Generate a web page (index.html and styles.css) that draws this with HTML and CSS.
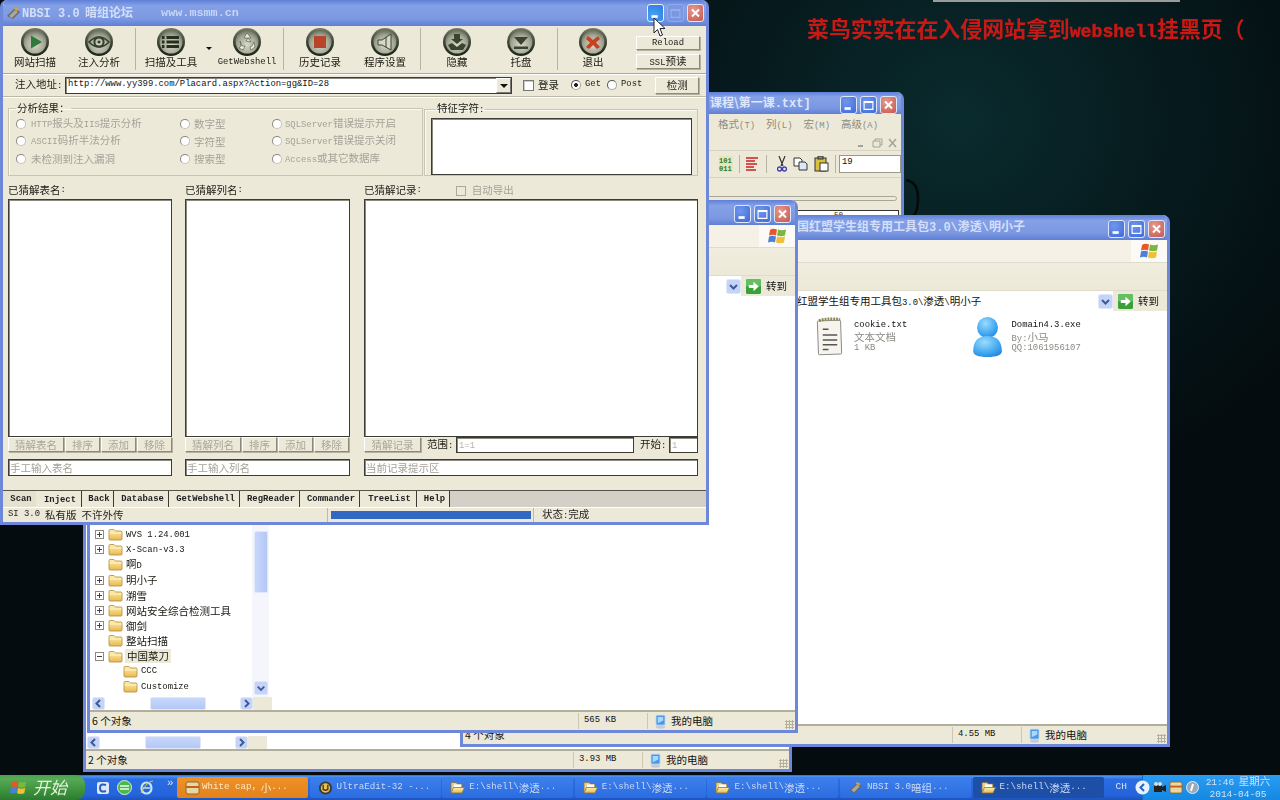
FILE: index.html
```html
<!DOCTYPE html>
<html lang="zh">
<head>
<meta charset="utf-8">
<title>NBSI 3.0</title>
<link rel="stylesheet" href="styles.css">
</head>
<body>
<svg class="defs" width="0" height="0">
<defs>
<linearGradient id="rim" x1="0" y1="0" x2="0" y2="1"><stop offset="0" stop-color="#767b68"/><stop offset=".5" stop-color="#3c4636"/><stop offset="1" stop-color="#1c2619"/></linearGradient>
<radialGradient id="ballIn" cx=".5" cy=".62" r=".62"><stop offset="0" stop-color="#d9d8ca"/><stop offset=".65" stop-color="#a5a897"/><stop offset="1" stop-color="#6c7260"/></radialGradient>
<linearGradient id="fold" x1="0" y1="0" x2="0" y2="1"><stop offset="0" stop-color="#fff0b0"/><stop offset="1" stop-color="#e8b850"/></linearGradient>
<radialGradient id="user" cx=".4" cy=".3" r=".9"><stop offset="0" stop-color="#9adcff"/><stop offset=".6" stop-color="#3da4ee"/><stop offset="1" stop-color="#1a6fd0"/></radialGradient>
<symbol id="ball" viewBox="0 0 28 28"><circle cx="14" cy="14" r="14" fill="url(#rim)"/><circle cx="14" cy="14" r="11.5" fill="url(#ballIn)"/></symbol>
<symbol id="folder" viewBox="0 0 15 13"><path d="M1 2.5 Q1 1.5 2 1.5H6L7.5 3H13Q14 3 14 4V11Q14 12 13 12H2Q1 12 1 11Z" fill="url(#fold)" stroke="#b08a3a" stroke-width=".8"/><path d="M1.5 5H13.5" stroke="#fff6c8" stroke-width="1"/></symbol>
<symbol id="folder-open" viewBox="0 0 15 13"><path d="M1 2Q1 1 2 1H6L7.5 2.5H12V11H1Z" fill="#e8d090" stroke="#8a7440" stroke-width=".8"/><rect x="4" y="3" width="7" height="5" fill="#fff"/><path d="M1 11.5 3.5 6H14.5L12 11.5Z" fill="url(#fold)" stroke="#8a7440" stroke-width=".8"/></symbol>
<symbol id="pc" viewBox="0 0 12 16"><path d="M2 1H10Q11 1 11 2V11Q11 12 10 12H2Q1 12 1 11V2Q1 1 2 1Z" fill="#4a98e6" stroke="#cfe0f4"/><ellipse cx="6" cy="14" rx="5" ry="1.8" fill="#c6c9d6"/><path d="M3 3H9V7L3 10Z" fill="#a8d8fa"/></symbol>
<symbol id="winlogo" viewBox="0 0 20 18"><path d="M3 3Q6 1 10 2.5L9 8.5Q6 7 2 8.5Z" fill="#e8562a"/><path d="M11 2.5Q15 4 19 2.5L18 8.5Q14 10 10 8.5Z" fill="#78b840"/><path d="M2 9.5Q5 8 9 9.5L8 15.5Q5 14 1 15.5Z" fill="#4a80d8"/><path d="M10 9.5Q14 11 18 9.5L17 15.5Q13 17 9 15.5Z" fill="#f0c030"/></symbol>
<symbol id="go" viewBox="0 0 16 16"><rect width="16" height="16" rx="2" fill="#3aa03a"/><rect width="16" height="8" rx="2" fill="#62c062"/><path d="M3 6.5H8V3L13.5 8 8 13V9.5H3Z" fill="#fff"/></symbol>
<symbol id="chev-d" viewBox="0 0 15 15"><rect x=".5" y=".5" width="14" height="14" rx="2" fill="#c4d3f6" stroke="#dfe7fb"/><path d="M4 6 7.5 9.5 11 6" fill="none" stroke="#3d5a98" stroke-width="2"/></symbol>
<symbol id="chev-l" viewBox="0 0 13 13"><rect x=".5" y=".5" width="12" height="12" rx="2" fill="#c4d3f6" stroke="#dfe7fb"/><path d="M8 3 4.5 6.5 8 10" fill="none" stroke="#3d5a98" stroke-width="2"/></symbol>
<symbol id="chev-r" viewBox="0 0 13 13"><rect x=".5" y=".5" width="12" height="12" rx="2" fill="#c4d3f6" stroke="#dfe7fb"/><path d="M5 3 8.5 6.5 5 10" fill="none" stroke="#3d5a98" stroke-width="2"/></symbol>
<symbol id="cmin" viewBox="0 0 17 17"><rect x="4" y="11" width="7" height="3" fill="#fff"/></symbol>
<symbol id="cmax" viewBox="0 0 17 17"><path d="M3.5 4.5H13.5V13.5H3.5Z M3.5 5.5H13.5" fill="none" stroke="#fff" stroke-width="1.3"/></symbol>
<symbol id="cx" viewBox="0 0 17 17"><path d="M4.5 4.5 12.5 12.5M12.5 4.5 4.5 12.5" stroke="#fff" stroke-width="2.2"/></symbol>
<symbol id="nbsi" viewBox="0 0 15 15"><path d="M1 10 9 2 14 6 7 13Z" fill="#6a6a64"/><path d="M3 10 9 4 12 6 6 12Z" fill="#a8a89e"/><path d="M9 1 13 3 11 5 8 3Z" fill="#e0a030"/></symbol>
</defs>
</svg>

<div class="slogan">菜鸟实实在在入侵网站拿到<span class="sl">webshell</span>挂黑页（</div>
<div class="topstrip"></div>
<svg class="arc" viewBox="0 0 20 40" width="20" height="40"><path d="M2 2Q14 4 14 20T8 38" fill="none" stroke="#05090a" stroke-width="2.5"/></svg>

<!-- UltraEdit -->
<section class="win w-a">
  <div class="title tt-a"><span class="tt">课程\第一课<span class="tl">.txt]</span></span>
    <div class="caps"><span class="cap"><svg><use href="#cmin"/></svg></span><span class="cap"><svg><use href="#cmax"/></svg></span><span class="cap red"><svg><use href="#cx"/></svg></span></div>
  </div>
  <div class="a-menu"><span>格式<span class="m">(T)</span></span><span>列<span class="m">(L)</span></span><span>宏<span class="m">(M)</span></span><span>高级<span class="m">(A)</span></span></div>
  <div class="a-mdi"><svg width="48" height="10" viewBox="0 0 48 10"><path d="M6 8H11" stroke="#a5a398" stroke-width="2"/><path d="M21 3H28V9H21ZM23 3V1H30V7H28" fill="none" stroke="#a5a398"/><path d="M37 1 44 9M44 1 37 9" stroke="#a5a398" stroke-width="1.5"/></svg></div>
  <div class="a-tool">
    <svg class="ai" width="14" height="16" viewBox="0 0 14 16"><rect width="14" height="16" fill="#e6e4c0"/><text x="0" y="7" class="bin">101</text><text x="0" y="15" class="bin">011</text></svg>
    <i class="asep"></i>
    <svg class="ai" width="12" height="14" viewBox="0 0 12 14"><path d="M0 1H12M0 4H9M0 7H11M0 10H8M0 13H10" stroke="#c82020" stroke-width="1.5"/></svg>
    <i class="asep as2"></i>
    <svg class="ai" width="10" height="16" viewBox="0 0 10 16"><path d="M2 0 6 10M8 0 4 10" stroke="#333" stroke-width="1.2"/><circle cx="2.5" cy="13" r="2" fill="none" stroke="#3a3ab0" stroke-width="1.3"/><circle cx="7.5" cy="13" r="2" fill="none" stroke="#3a3ab0" stroke-width="1.3"/></svg>
    <svg class="ai" width="15" height="14" viewBox="0 0 15 14"><path d="M1 1H7L9 3V9H1Z" fill="#fff" stroke="#333"/><path d="M6 5H12L14 7V13H6Z" fill="#dfe6f6" stroke="#333"/></svg>
    <svg class="ai" width="15" height="16" viewBox="0 0 15 16"><rect x="1" y="2" width="11" height="13" fill="#d8c040" stroke="#333"/><rect x="4" y="0" width="5" height="3" fill="#888" stroke="#333"/><rect x="6" y="7" width="8" height="8" fill="#fff" stroke="#333"/></svg>
    <i class="asep"></i>
    <div class="a-input m">19</div>
  </div>
  <div class="a-slider"></div>
  <div class="a-ruler m">50</div>
</section>

<!-- Explorer B -->
<section class="win w-b">
  <div class="title"></div>
  <div class="x-body">
    <div class="x-left"><div class="x-tree-fill"></div>
      <div class="hscroll"><svg class="sb"><use href="#chev-l"/></svg><div class="htrack"><i class="hthumb"></i></div><svg class="sb"><use href="#chev-r"/></svg><i class="corner"></i></div>
    </div>
  </div>
  <div class="status st-b"><div>2 个对象</div><div>3.93 MB</div><div class="pc"><svg><use href="#pc"/></svg>我的电脑</div><i class="grip"></i></div>
</section>

<!-- Explorer D -->
<section class="win w-d">
  <div class="title tt-d"><span class="tt pad-d">国红盟学生组专用工具包<span class="tl">3.0\</span>渗透<span class="tl">\</span>明小子</span>
    <div class="caps"><span class="cap"><svg><use href="#cmin"/></svg></span><span class="cap"><svg><use href="#cmax"/></svg></span><span class="cap red"><svg><use href="#cx"/></svg></span></div>
  </div>
  <div class="x-menu"><div class="logo"><svg><use href="#winlogo"/></svg></div></div>
  <div class="x-tool"></div>
  <div class="x-addr"><div class="combo pad-addr">红盟学生组专用工具包<span class="m">3.0\</span>渗透<span class="m">\</span>明小子</div><svg class="dd"><use href="#chev-d"/></svg><div class="goto"><svg><use href="#go"/></svg>转到</div></div>
  <div class="files">
    <div class="file"><svg class="f-ico" viewBox="0 0 30 40"><rect x="3" y="3" width="24" height="35" rx="1" fill="#f6f4ec" stroke="#8a8a88" transform="rotate(-2 15 20)"/><path d="M4 3Q15 0 26 2" stroke="#8a8a50" stroke-width="3" stroke-dasharray="2 1" fill="none"/><path d="M8 12H14M8 18H23M8 23H23M8 28H23M8 33H14" stroke="#555" stroke-width="1.6"/></svg>
      <div class="f-txt"><b class="m">cookie.txt</b><span>文本文档</span><span class="m">1 KB</span></div></div>
    <div class="file"><svg class="f-ico" viewBox="0 0 30 42"><circle cx="15" cy="11" r="11" fill="url(#user)"/><path d="M0 36Q0 20 15 20T30 36Q30 42 15 42T0 36Z" fill="url(#user)"/></svg>
      <div class="f-txt"><b class="m">Domain4.3.exe</b><span><span class="m">By:</span>小马</span><span class="m">QQ:1061956107</span></div></div>
  </div>
  <div class="status st-d"><div>4 个对象</div><div>4.55 MB</div><div class="pc"><svg><use href="#pc"/></svg>我的电脑</div><i class="grip"></i></div>
</section>

<!-- Explorer C -->
<section class="win w-c">
  <div class="title tt-c">
    <div class="caps"><span class="cap"><svg><use href="#cmin"/></svg></span><span class="cap"><svg><use href="#cmax"/></svg></span><span class="cap red"><svg><use href="#cx"/></svg></span></div>
  </div>
  <div class="x-menu"><div class="logo"><svg><use href="#winlogo"/></svg></div></div>
  <div class="x-tool c-tool"></div>
  <div class="x-addr"><div class="combo"></div><svg class="dd"><use href="#chev-d"/></svg><div class="goto"><svg><use href="#go"/></svg>转到</div></div>
  <div class="x-body">
    <div class="x-left">
      <div class="tree-wrap">
        <div class="tree">
          <div class="row"><i class="exp"></i><svg class="fo"><use href="#folder"/></svg><span class="m">WVS 1.24.001</span></div>
          <div class="row"><i class="exp"></i><svg class="fo"><use href="#folder"/></svg><span class="m">X-Scan-v3.3</span></div>
          <div class="row"><i class="exp none"></i><svg class="fo"><use href="#folder"/></svg><span>啊<span class="m">D</span></span></div>
          <div class="row"><i class="exp"></i><svg class="fo"><use href="#folder"/></svg><span>明小子</span></div>
          <div class="row"><i class="exp"></i><svg class="fo"><use href="#folder"/></svg><span>溯雪</span></div>
          <div class="row"><i class="exp"></i><svg class="fo"><use href="#folder"/></svg><span>网站安全综合检测工具</span></div>
          <div class="row"><i class="exp"></i><svg class="fo"><use href="#folder"/></svg><span>御剑</span></div>
          <div class="row"><i class="exp none"></i><svg class="fo"><use href="#folder"/></svg><span>整站扫描</span></div>
          <div class="row"><i class="exp minus"></i><svg class="fo"><use href="#folder"/></svg><span class="sel">中国菜刀</span></div>
          <div class="row sub"><svg class="fo"><use href="#folder"/></svg><span class="m">CCC</span></div>
          <div class="row sub"><svg class="fo"><use href="#folder"/></svg><span class="m">Customize</span></div>
        </div>
        <div class="vscroll"><i class="vthumb"></i><svg class="sbv"><use href="#chev-d"/></svg></div>
      </div>
      <div class="hscroll"><svg class="sb"><use href="#chev-l"/></svg><div class="htrack"><i class="hthumb"></i></div><svg class="sb"><use href="#chev-r"/></svg><i class="corner"></i></div>
    </div>
  </div>
  <div class="status st-c"><div>6 个对象</div><div>565 KB</div><div class="pc"><svg><use href="#pc"/></svg>我的电脑</div><i class="grip"></i></div>
</section>

<!-- NBSI main -->
<section class="win w-main">
  <div class="title tt-main">
    <svg class="t-ico"><use href="#nbsi"/></svg>
    <span class="tt"><span class="tl">NBSI 3.0</span>&nbsp; 暗组论坛</span><span class="tl site">www.msmm.cn</span>
    <div class="caps"><span class="cap hot"><svg><use href="#cmin"/></svg></span><span class="cap dim"><svg><use href="#cmax"/></svg></span><span class="cap red"><svg><use href="#cx"/></svg></span></div>
  </div>

  <div class="toolbar">
    <div class="tool w64"><svg class="b"><use href="#ball"/><path d="M10 7.5 21 14 10 20.5Z" fill="#2f7a3a"/></svg><span>网站扫描</span></div>
    <div class="tool w64"><svg class="b"><use href="#ball"/><path d="M4 14Q14 4 24 14 14 24 4 14Z" fill="none" stroke="#33402c" stroke-width="1.6"/><circle cx="14" cy="14" r="4.6" fill="none" stroke="#33402c" stroke-width="2"/><circle cx="14" cy="14" r="1.6" fill="#33402c"/></svg><span>注入分析</span></div>
    <i class="sep"></i>
    <div class="tool w64"><svg class="b"><use href="#ball"/><path d="M9.5 9.5H22M9.5 14H22M9.5 18.5H22" stroke="#25301f" stroke-width="3"/><path d="M5 9.5H7.5M5 14H7.5M5 18.5H7.5" stroke="#25301f" stroke-width="3"/></svg><span>扫描及工具</span></div>
    <svg class="drop" width="12" height="47" viewBox="0 0 12 47"><path d="M3 21H9L6 24Z" fill="#111"/></svg>
    <div class="tool w64"><svg class="b"><use href="#ball"/><path d="M14 5 18 10H15L18 14 13 13 15 10H11ZM7 13 9 18 12 18 10 22 6 20 8 18ZM21 14 22 19 18 22 17 19 19 18Z" fill="#eceae0" stroke="#5a6450" stroke-width=".7"/></svg><span class="m">GetWebshell</span></div>
    <i class="sep"></i>
    <div class="tool w66"><svg class="b"><use href="#ball"/><rect x="8" y="8" width="12" height="12" fill="#b8452a"/></svg><span>历史记录</span></div>
    <div class="tool w64"><svg class="b"><use href="#ball"/><path d="M7 12H11L20 6V22L11 17H7Z" fill="#d8d6c8" stroke="#3c4636"/><path d="M15 9V19" stroke="#3c4636"/></svg><span>程序设置</span></div>
    <i class="sep s3"></i>
    <div class="tool w66"><svg class="b"><use href="#ball"/><path d="M11 6H17V11H20L14 16 8 11H11Z" fill="#39452f"/><path d="M5 17 9 15 14 19 19 15 23 17 20 22H8Z" fill="#39452f"/></svg><span>隐藏</span></div>
    <div class="tool w62"><svg class="b"><use href="#ball"/><path d="M7 9H21L14 17Z" fill="#39452f"/><rect x="7" y="18.5" width="14" height="2.5" fill="#39452f"/></svg><span>托盘</span></div>
    <i class="sep s4"></i>
    <div class="tool w64"><svg class="b"><use href="#ball"/><path d="M9 8 14 12 19 8 21 11 17 14.5 21 19 18 21 14 17 10 21 7 19 11 14.5 7 11Z" fill="#c9421f"/></svg><span>退出</span></div>
    <div class="tb-btns"><button class="btn m">Reload</button><button class="btn"><span class="m">SSL</span>预读</button></div>
  </div>

  <div class="addr">
    <label class="a-lbl">注入地址<span class="m">:</span></label>
    <div class="inp a-url"><span class="m">http://www.yy399.com/Placard.aspx?Action=gg&amp;ID=28</span><i class="a-dd"></i></div>
    <i class="check ck1"></i><span class="lg">登录</span>
    <i class="radio on"></i><span class="m g">Get</span>
    <i class="radio"></i><span class="m g">Post</span>
    <button class="btn chk">检测</button>
  </div>

  <div class="analysis">
    <fieldset class="fs fs1"><legend>分析结果：</legend>
      <div class="opts">
        <div class="opt"><i class="radio"></i><span><span class="m">HTTP</span>报头及<span class="m">IIS</span>提示分析</span></div>
        <div class="opt"><i class="radio"></i><span>数字型</span></div>
        <div class="opt"><i class="radio"></i><span><span class="m">SQLServer</span>错误提示开启</span></div>
        <div class="opt"><i class="radio"></i><span><span class="m">ASCII</span>码折半法分析</span></div>
        <div class="opt"><i class="radio"></i><span>字符型</span></div>
        <div class="opt"><i class="radio"></i><span><span class="m">SQLServer</span>错误提示关闭</span></div>
        <div class="opt"><i class="radio"></i><span>未检测到注入漏洞</span></div>
        <div class="opt"><i class="radio"></i><span>搜索型</span></div>
        <div class="opt"><i class="radio"></i><span><span class="m">Access</span>或其它数据库</span></div>
      </div>
    </fieldset>
    <fieldset class="fs fs2"><legend>特征字符<span class="m">:</span></legend><div class="inp feature"></div></fieldset>
  </div>

  <div class="cols">
    <div class="col c1">
      <div class="c-lbl">已猜解表名<span class="m">:</span></div>
      <div class="inp listbox"></div>
      <div class="c-btns"><button class="btn dis b56">猜解表名</button><button class="btn dis b35">排序</button><button class="btn dis b35">添加</button><button class="btn dis b35">移除</button></div>
      <div class="inp hint">手工输入表名</div>
    </div>
    <div class="col c2">
      <div class="c-lbl">已猜解列名<span class="m">:</span></div>
      <div class="inp listbox"></div>
      <div class="c-btns"><button class="btn dis b56">猜解列名</button><button class="btn dis b35">排序</button><button class="btn dis b35">添加</button><button class="btn dis b35">移除</button></div>
      <div class="inp hint">手工输入列名</div>
    </div>
    <div class="col c3">
      <div class="c-lbl">已猜解记录<span class="m">:</span><i class="check ck2"></i><span class="ae">自动导出</span></div>
      <div class="inp listbox"></div>
      <div class="c-btns rec"><button class="btn dis b57">猜解记录</button><span class="r1">范围<span class="m">:</span></span><div class="inp r2"><span class="m">1=1</span></div><span class="r3">开始<span class="m">:</span></span><div class="inp r4"><span class="m">1</span></div></div>
      <div class="inp hint">当前记录提示区</div>
    </div>
  </div>

  <div class="tabs">
    <span class="tab t-scan">Scan</span><span class="tab on t-inj">Inject</span><span class="tab t-back">Back</span><span class="tab t-db">Database</span><span class="tab t-gw">GetWebshell</span><span class="tab t-rr">RegReader</span><span class="tab t-cm">Commander</span><span class="tab t-tl">TreeList</span><span class="tab t-hp">Help</span>
  </div>
  <div class="mstatus">
    <div class="ms1"><span class="m">SI 3.0</span><span>私有版</span><span>不许外传</span></div>
    <div class="ms2"><i class="bar"></i></div>
    <div class="ms3">状态<span class="m">:</span>完成</div>
  </div>
</section>

<svg class="cursor" width="13" height="21" viewBox="0 0 13 21"><path d="M1 1V16L4.5 12.5 7 19 9.5 18 7 11.5H12Z" fill="#fff" stroke="#223" stroke-width="1"/></svg>

<footer class="taskbar">
  <div class="start"><svg width="18" height="17"><use href="#winlogo"/></svg><span>开始</span></div>
  <div class="quick">
    <svg width="14" height="14" viewBox="0 0 14 14"><rect x="1" y="1" width="12" height="12" rx="2" fill="#dfe8fa"/><path d="M10 4Q4 2 4 7T10 10" fill="none" stroke="#2a5cc0" stroke-width="2"/></svg>
    <svg width="15" height="15" viewBox="0 0 15 15"><circle cx="7.5" cy="7.5" r="7" fill="#4cb84c" stroke="#d8f0d8"/><path d="M3 6H12M3 9H12" stroke="#e8ffe8" stroke-width="1.6"/></svg>
    <svg width="15" height="15" viewBox="0 0 15 15"><ellipse cx="7.5" cy="8" rx="5" ry="5.5" fill="none" stroke="#bfe6fa" stroke-width="2.2"/><path d="M4 8H11" stroke="#bfe6fa" stroke-width="1.5"/><path d="M14 1Q8 1 2 13" fill="none" stroke="#e8c040" stroke-width="1"/></svg>
    <span class="more m">»</span>
  </div>
  <div class="tasks">
    <div class="task flash"><svg class="ti" viewBox="0 0 15 14"><rect x="1" y="1" width="13" height="12" rx="2" fill="#e8d8a0" stroke="#8a6a30"/><path d="M1 6H14" stroke="#c06020" stroke-width="2"/></svg><span class="m">White cap，</span>小<span class="m">...</span></div>
    <div class="task"><svg class="ti" viewBox="0 0 15 15"><circle cx="7.5" cy="7.5" r="7" fill="#3a3a30"/><circle cx="7.5" cy="7.5" r="5" fill="#e8c050"/><path d="M5 4V9Q7.5 11 10 9V4" fill="none" stroke="#3a3a30" stroke-width="1.5"/></svg><span class="m">UltraEdit-32 -...</span></div>
    <div class="task"><svg class="ti"><use href="#folder-open"/></svg><span class="m">E:\shell\</span>渗透<span class="m">...</span></div>
    <div class="task"><svg class="ti"><use href="#folder-open"/></svg><span class="m">E:\shell\</span>渗透<span class="m">...</span></div>
    <div class="task"><svg class="ti"><use href="#folder-open"/></svg><span class="m">E:\shell\</span>渗透<span class="m">...</span></div>
    <div class="task"><svg class="ti"><use href="#nbsi"/></svg><span class="m">NBSI 3.0 </span>暗组<span class="m">...</span></div>
    <div class="task active"><svg class="ti"><use href="#folder-open"/></svg><span class="m">E:\shell\</span>渗透<span class="m">...</span></div>
  </div>
  <span class="lang m">CH</span>
  <div class="tray">
    <svg class="tb" width="15" height="15" viewBox="0 0 15 15"><circle cx="7.5" cy="7.5" r="7" fill="#e8f2fc"/><path d="M9 4 5.5 7.5 9 11" fill="none" stroke="#2a62c8" stroke-width="2"/></svg>
    <svg width="13" height="12" viewBox="0 0 13 12"><rect x="1" y="3" width="8" height="7" fill="#222"/><path d="M9 5 13 3V10L9 8Z" fill="#222"/><circle cx="3" cy="2" r="2" fill="#ddd"/><circle cx="7" cy="2" r="2" fill="#ddd"/></svg>
    <svg width="14" height="13" viewBox="0 0 15 14"><rect x="1" y="1" width="13" height="12" rx="2" fill="#e8d8a0" stroke="#8a6a30"/><path d="M1 6H14" stroke="#c06020" stroke-width="2"/></svg>
    <svg width="13" height="13" viewBox="0 0 13 13"><circle cx="6.5" cy="6.5" r="6" fill="#9ab" stroke="#e4ecf4"/><path d="M7 3 5 10" stroke="#fff" stroke-width="2"/></svg>
    <div class="clock"><div><span class="m">21:46</span>&nbsp; 星期六</div><div class="m">2014-04-05</div></div>
  </div>
</footer>
</body>
</html>
```
FILE: styles.css
```css
*{box-sizing:border-box}
html,body{margin:0;padding:0;height:100%}
body{width:1280px;height:800px;overflow:hidden;position:relative;
  background:radial-gradient(ellipse 420px 380px at 960px 120px,#0a2b2e 0,#06191c 55%,#040c0f 100%),#04090c;
  font-family:"Noto Sans CJK SC","Liberation Sans",sans-serif;font-size:10.5px;color:#1c1c14;line-height:1.1;filter:blur(.3px)}
.defs{position:absolute}
.m{font-family:"Liberation Mono","Noto Sans CJK SC",monospace;font-size:8.9px}
.tl{font-family:"Liberation Mono","Noto Sans CJK SC",monospace;font-size:12px}
i{display:block;font-style:normal}
button{font-family:inherit;font-size:inherit;color:inherit;padding:0;margin:0}

.slogan{position:absolute;left:807px;top:15px;font-size:21.9px;font-weight:700;color:#d41a16;white-space:nowrap;line-height:26px;opacity:.95}
.sl{font-family:"Liberation Mono",monospace;font-size:18.2px;font-weight:700;-webkit-text-stroke:.5px #d41a16}
.topstrip{position:absolute;left:933px;top:0;width:247px;height:2px;background:#9a9c9c}
.arc{position:absolute;left:904px;top:178px}

/* windows */
.win{position:absolute;display:flex;flex-direction:column;background:#ece9d8;border:3px solid #6d88da;border-top:0;border-radius:7px 7px 0 0;overflow:hidden}
.w-a{left:500px;top:92px;width:404px;height:300px}
.w-b{left:83px;top:400px;width:709px;height:372px}
.w-d{left:460px;top:215px;width:710px;height:532px}
.w-c{left:87px;top:200px;width:711px;height:533px}
.w-main{left:0;top:0;width:709px;height:525px}

.title{flex:none;height:23px;display:flex;align-items:center;padding-right:2px;margin:0 -3px;padding-left:3px;
  background:linear-gradient(180deg,#5f80d8 0,#84a0e6 22%,#7c98e2 72%,#5f7fd6 100%)}
.tt-a{height:22px;padding-left:210px;padding-top:4px}
.tt-c{height:25px;padding-top:3px}
.tt-d{height:25px;padding-top:3px}
.tt-main{height:26px}
.tt{font-size:12px;font-weight:700;color:#d3dffa;white-space:nowrap}
.pad-d{padding-left:334px}
.tt-a .tt{color:#dde6fb;margin-top:-4px}
.tt-d .tt{margin-top:-3px}
.caps{margin-left:auto;display:flex;gap:3px;padding-right:3px}
.tt-a .caps,.tt-c .caps{padding-right:5px}
.cap{width:17px;height:18px;border:1px solid #dfe7fb;border-radius:3px;background:radial-gradient(circle at 35% 30%,#6f97ee,#3f69d6);display:block}
.cap svg{display:block;width:15px;height:16px}
.cap.red{background:radial-gradient(circle at 35% 30%,#e8988c,#c4584e)}
.cap.hot{background:radial-gradient(circle at 35% 70%,#4aa4f4,#2c7ae2);border-color:#e8f0fc}
.cap.dim{background:#7a97e2;border-color:#94ade8;opacity:.9}
.cap.dim svg{opacity:.25}
.t-ico{width:15px;height:15px;margin:0 1px 0 3px;flex:none}
.site{margin-left:28px;font-weight:700;color:#c8d6f6;font-size:11.8px}

/* ultraedit */
.a-menu{height:21px;flex:none;display:flex;justify-content:flex-end;align-items:center;gap:11px;padding-right:23px;color:#8d8b80;background:#ece9d8}
.a-mdi{height:15px;flex:none;display:flex;justify-content:flex-end;align-items:center;padding-right:1px}
.a-tool{height:28px;flex:none;display:flex;justify-content:flex-end;align-items:center;gap:6px;border-top:1px solid #d8d4c4;border-bottom:1px solid #d8d4c4}
.asep{width:1px;height:18px;background:#b8b4a2}
.as2{margin:0 4px 0 2px}
.bin{font-family:"Liberation Mono",monospace;font-size:7px;font-weight:700;fill:#2a7a2a}
.a-input{width:62px;height:18px;margin-left:-3px;background:#fff;border:1px solid #9a9888;padding:2px 2px;color:#111}
.a-slider{height:5px;flex:none;margin:18px 4px 0 0;border:1px solid #a8a698;border-radius:3px;background:#ece9d8}
.a-ruler{height:7px;flex:none;margin:9px 2px 0 0;background:#fff;border:1px solid #333;border-bottom:0;padding-left:330px;color:#222;font-size:7.5px;line-height:8px;overflow:hidden}

/* explorer */
.x-menu{height:23px;flex:none;display:flex;justify-content:flex-end;background:#f5f1e6;border-bottom:1px solid #e0dccb}
.logo{width:36px;background:#fbfaf6;display:flex;align-items:center;justify-content:center}
.logo svg{width:20px;height:18px}
.x-tool{height:28px;flex:none;background:linear-gradient(180deg,#f1eddf,#ece9d8);border-bottom:1px solid #e0dccb}
.c-tool{height:28px}
.x-addr{height:20px;flex:none;display:flex;align-items:center;background:#ece9d8}
.combo{flex:1;height:20px;background:#fff;white-space:nowrap;padding-top:4px;color:#111;overflow:hidden}
.pad-addr{padding-left:334px}
.dd{width:15px;height:15px;flex:none;margin-left:-15px;position:relative}
.goto{width:54px;flex:none;display:flex;align-items:center;gap:5px;padding-left:5px;color:#111;white-space:nowrap}
.goto svg{width:15px;height:15px;flex:none}
.x-body{flex:1;min-height:0;display:flex;background:#fff}
.x-left{width:180px;display:flex;flex-direction:column;margin-left:2px;flex:none}
.w-b .x-left{margin-left:1px}
.x-tree-fill{flex:1}
.tree-wrap{flex:1;min-height:0;display:flex;overflow:hidden}
.tree{flex:1;display:flex;flex-direction:column;justify-content:flex-end;padding:0 0 3px 3px;color:#16160f}
.row{height:15.2px;flex:none;display:flex;align-items:center;white-space:nowrap}
.row.sub{padding-left:28px}
.row>.m{font-size:8.9px;padding-top:2px}
.exp{width:9px;height:9px;margin-right:4px;flex:none;border:1px solid #8a8a80;background:linear-gradient(90deg,#444,#444) center/5px 1px no-repeat,linear-gradient(#444,#444) center/1px 5px no-repeat,#fff}
.exp.minus{background:linear-gradient(90deg,#444,#444) center/5px 1px no-repeat,#fff}
.exp.none{visibility:hidden}
.fo{width:15px;height:13px;margin-right:3px;flex:none}
.sel{background:#ece9d8;padding:1px 2px;margin-left:-1px}
.vscroll{width:17px;flex:none;margin-right:3px;display:flex;flex-direction:column;justify-content:flex-end;align-items:center;padding-bottom:2px;background:#f4f6fb}
.vthumb{width:14px;height:62px;margin-bottom:88px;border-radius:2px;background:linear-gradient(90deg,#c8d7fb,#b4c8f6);border:1px solid #e0e8fa}
.sbv{width:14px;height:14px;flex:none}
.hscroll{height:13px;flex:none;display:flex;align-items:center;background:#fff}
.sb{width:13px;height:13px;flex:none}
.htrack{width:135px;height:13px;padding-left:45px}
.hthumb{width:56px;height:13px;border-radius:2px;background:linear-gradient(#c8d7fb,#b4c8f6);border:1px solid #e0e8fa}
.corner{flex:1;height:13px;background:#ece9d8;align-self:stretch}
.status{height:20px;flex:none;display:grid;align-items:center;position:relative;background:#ece9d8;border-top:2px solid #b2ae9c;color:#111;white-space:nowrap}
.status>div{padding-left:5px;height:16px;display:flex;align-items:center;font-family:"Liberation Mono","Noto Sans CJK SC",monospace}
.status>div+div{border-left:1px solid #cbc7b4}
.status>div:first-child{padding-left:2px;font-family:"Noto Sans CJK SC",sans-serif}
.status>div:nth-child(2){font-size:8.9px}
.status>div:nth-child(3){font-family:"Noto Sans CJK SC",sans-serif;padding-left:7px;gap:5px}
.pc svg{width:11px;height:15px;flex:none}
.st-b{grid-template-columns:487px 69px 1fr}
.st-c{grid-template-columns:488px 69px 1fr}
.st-d{grid-template-columns:489px 69px 1fr}
.grip{position:absolute;right:1px;bottom:1px;width:9px;height:9px;background:radial-gradient(circle,#b4b09c 1px,transparent 1.2px) 0 0/3px 3px}
.files{flex:1;background:#fff;display:flex;padding:6px 0 0 352px;color:#8a8a86}
.file{width:157.5px;display:flex;gap:10px;flex:none}
.f-ico{width:29px;height:40px;flex:none}
.f-txt{display:flex;flex-direction:column;padding-top:3px;line-height:11px}
.f-txt>*{display:block;height:11px;white-space:nowrap}
.f-txt>*:nth-child(3){margin-top:0;line-height:12px}
.f-txt b{font-weight:400;color:#111}

/* NBSI toolbar */
.toolbar{height:48px;flex:none;display:flex;border-bottom:1px solid #aca899;box-shadow:0 1px 0 #fff;position:relative}
.tool{display:flex;flex-direction:column;align-items:center;padding-top:2px;white-space:nowrap;flex:none}
.tool span{margin-top:0;line-height:12px}
.tool span.m{font-size:8.9px}
.w64{width:64px}.w66{width:66px}.w62{width:62px}
.b{width:28px;height:28px;flex:none}
.sep{width:1px;height:42px;margin:2px 3px 0 4px;background:#b8b4a2;flex:none}
.s3{margin-left:3px}
.s4{margin-left:5px}
.drop{flex:none}
.tb-btns{display:flex;flex-direction:column;gap:4px;padding:10px 0 0 11px;flex:none}
.btn{background:#ece9d8;border:1px solid;border-color:#fff #8d8a7a #8d8a7a #fff;box-shadow:1px 1px 0 #b5b2a2;display:block}
.tb-btns .btn{width:64px;height:14px;line-height:11px}
.tb-btns .btn+.btn{height:15px}
.addr{height:23px;flex:none;display:flex;align-items:center;border-bottom:1px solid #bdb9a8;box-shadow:0 1px 0 #fff;white-space:nowrap;padding-left:12px}
.a-lbl{width:50px}
.inp{background:#fff;border:1px solid #3c3c34;box-shadow:inset 1px 1px 0 #8c8a80}
.a-url{width:447px;height:17px;display:flex;align-items:center;padding-left:2px;position:relative;color:#111}
.a-dd{position:absolute;right:0;top:0;bottom:0;width:15px;background:#ece9d8;border:1px solid;border-color:#fff #777 #777 #fff}
.a-dd::after{content:"";display:block;margin:5px auto 0;width:0;height:0;border:4px solid transparent;border-top:4px solid #111;border-bottom:0}
.check{width:11px;height:11px;background:#fff;border:1px solid #777;box-shadow:inset 1px 1px 0 #ccc;flex:none}
.ck1{margin-left:11px}
.lg{margin:0 12px 0 4px}
.radio{width:10px;height:10px;border-radius:50%;flex:none;background:#fff;border:1px solid #a8a69a;border-left-color:#555;border-top-color:#555}
.radio.on{background:radial-gradient(circle,#222 1.7px,#fff 2.2px)}
.g{margin:0 6px 0 4px}
.chk{width:44px;height:17px;margin-left:7px;line-height:12px}
.analysis{height:75px;flex:none;display:flex;margin:5px 8px 0 5px}
.fs{margin:0;padding:0;border:1px solid #c8c5b4;box-shadow:inset 1px 1px 0 #fbfaf4;height:74px}
.fs legend{margin-left:7px;padding:0 1px;line-height:12px;font-size:10.5px;color:#22221a}
.fs1{width:417px;margin-right:1px;color:#a4a298}
.fs2{flex:1;display:flex;padding:0 5px}
.fs2 legend{margin-left:6px}
.feature{width:261px;height:57px;margin-left:1px;margin-top:2px}
.opts{display:grid;grid-template-columns:164px 92px 1fr;grid-auto-rows:17.6px;padding:1px 0 0 7px}
.opt{display:flex;align-items:center;gap:5px;white-space:nowrap}
.opt .radio{border-color:#c4c2b6;border-left-color:#8a887e;border-top-color:#8a887e}
.opt:nth-child(3n+2){gap:4px}
.opt:nth-child(3n){gap:3px}
.cols{display:flex;margin:2px 0 0 5px;flex:none;height:297px}
.col{display:flex;flex-direction:column;flex:none}
.c1{width:164px;margin-right:13px}
.c2{width:165px;margin-right:14px}
.c3{width:334px}
.c-lbl{height:20px;flex:none;padding-top:5px;display:flex;line-height:12px;white-space:nowrap;color:#22221a}
.listbox{height:238px;flex:none}
.c-btns{height:15px;flex:none;display:flex;gap:1px;margin-bottom:7px;margin-top:0;color:#a4a298}
.btn.dis{height:15px;line-height:11px;color:#a8a69a}
.b56{width:56px}.b35{width:35px}.b57{width:57px}
.hint{height:17px;flex:none;color:#a4a298;padding:1px 1px;line-height:13px}
.ck2{margin:2px 6px 0 34px;width:10px;height:10px;border-color:#aaa8a0;box-shadow:none;background:#ece9d8}
.ae{color:#a4a298}
.rec{color:#22221a;align-items:center;gap:0}
.r1{margin-left:6px;width:29px;white-space:nowrap}
.r2{width:178px;height:16px;color:#b4b2a8;padding-left:2px;line-height:12px}
.r3{margin-left:6px;width:29px;white-space:nowrap}
.r4{width:29px;height:16px;color:#b4b2a8;padding-left:2px;line-height:12px}
.tabs{height:17px;flex:none;display:flex;margin-top:auto;background:#d4d0c8;border-top:1px solid #55534a;font-family:"Liberation Mono",monospace;font-size:8.9px;font-weight:700;color:#222}
.tab{display:block;flex:none;background:#ece9d8;border-right:1px solid #3c3a32;text-align:center;line-height:16px;padding-left:3px}
.t-scan{width:33px;border-right:0;background:#e4e1d0}
.t-inj{width:46px;padding-top:1px;background:#ece9d8}
.t-back{width:32px}.t-db{width:55px}.t-gw{width:71px}.t-rr{width:60px}.t-cm{width:60px}.t-tl{width:57px}.t-hp{width:33px}
.mstatus{height:15px;flex:none;display:flex;align-items:center;border-top:1px solid #fff;white-space:nowrap;color:#222}
.ms1{width:325px;padding-left:5px;border-right:1px solid #bdb9a8;height:100%;display:flex;align-items:center;gap:5px}
.ms2{width:206px;height:100%;padding:3px 3px;border-right:1px solid #bdb9a8}
.bar{height:100%;background:#3068c4;width:200px}
.ms3{padding-left:8px}

.cursor{position:absolute;left:653px;top:17px;z-index:5}

/* taskbar */
.taskbar{position:absolute;left:0;bottom:0;width:1280px;height:25px;display:flex;align-items:center;z-index:4;
  background:linear-gradient(180deg,#2a6bde 0,#4b8ff0 6%,#2a6ce2 18%,#2464dc 80%,#1d52bc 100%);color:#dbe6fa}
.start{width:85px;height:25px;flex:none;display:flex;align-items:center;gap:6px;padding-left:9px;border-radius:0 9px 9px 0;
  background:linear-gradient(180deg,#4aa04a 0,#57ab57 15%,#3a8e3a 70%,#2d7a32 100%);color:#e4f2dc;font-style:italic;font-size:17px}
.quick{width:92px;flex:none;display:flex;align-items:center;gap:7px;padding-left:11px}
.more{font-size:11px;margin:-8px 0 0 6px;color:#cfe0fa}
.tasks{display:flex;gap:1.6px;flex:none}
.task{width:131px;height:21px;flex:none;display:flex;align-items:center;padding-left:8px;border-radius:2px;background:linear-gradient(180deg,#3d80ec,#2b6ce0);white-space:nowrap;overflow:hidden;color:#c9d9f6}
.task .m{font-size:9.2px}
.task.flash{background:linear-gradient(180deg,#ee9228,#e4811a);color:#fbe8c4}
.task.flash .ti{margin-right:2px}
.task.active{background:#1d4fa6}
.ti{width:15px;height:14px;margin-right:4px;flex:none}
.lang{margin-left:12px;width:20px;color:#d8e4f8;font-size:9.5px}
.tray{margin-left:auto;height:25px;width:138px;flex:none;display:flex;align-items:center;gap:3px;background:linear-gradient(180deg,#2c9cf2,#1488e2);padding-left:0;border-left:1px solid #0e6ac8}
.tb{margin-left:-8px}
.clock{margin-left:3px;text-align:center;line-height:12px;color:#cfe2fa;white-space:nowrap;width:66px}
.clock .m{font-size:9.5px}
```
